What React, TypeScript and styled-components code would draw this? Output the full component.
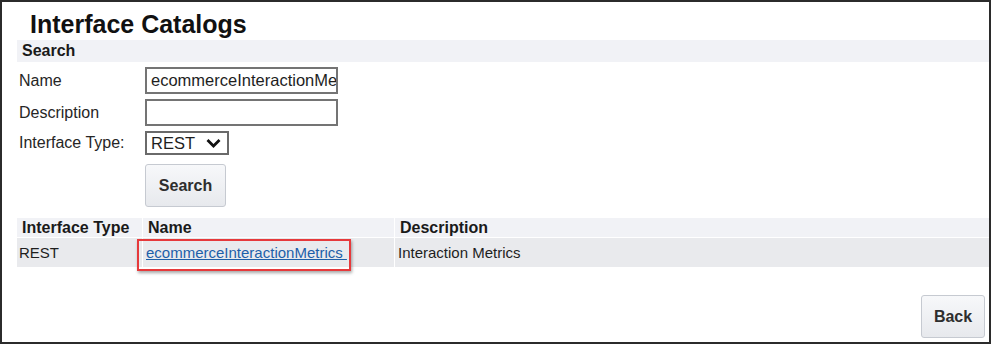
import styled, { createGlobalStyle } from "styled-components";

const GlobalStyle = createGlobalStyle`
  html, body {
    margin: 0;
    padding: 0;
    background: #ffffff;
  }
  body {
    font-family: "Liberation Sans", Arial, sans-serif;
    color: #1e1e1e;
  }
`;

const Frame = styled.div`
  box-sizing: border-box;
  width: 991px;
  height: 344px;
  border: 2px solid #2b2b2b;
  background: #ffffff;
  padding-left: 15px;
  display: flex;
  flex-direction: column;
`;

const Title = styled.h1`
  margin: 0 0 2px 13px;
  padding-top: 8px;
  font-size: 25px;
  line-height: 28px;
  font-weight: bold;
  color: #111111;
`;

const SectionBar = styled.div`
  height: 22px;
  line-height: 22px;
  background: #f1f2f6;
  padding-left: 5px;
  font-size: 16px;
  font-weight: bold;
  color: #1a1a1a;
`;

const Form = styled.div`
  display: grid;
  grid-template-columns: 128px auto;
  justify-content: start;
  align-items: center;
  row-gap: 5px;
  padding-top: 5px;
`;

const Label = styled.label`
  padding-left: 2px;
  font-size: 16px;
  color: #262626;
`;

const TextInput = styled.input`
  box-sizing: border-box;
  width: 193px;
  height: 27px;
  border: 2px solid #747474;
  padding: 0 0 0 4px;
  font-family: "Liberation Sans", Arial, sans-serif;
  font-size: 16.5px;
  color: #1e1e1e;
  outline: none;
`;

const SelectBox = styled.div`
  box-sizing: border-box;
  width: 84px;
  height: 24px;
  border: 2px solid #6a6a6a;
  display: flex;
  align-items: center;
  justify-content: space-between;
  padding: 0 6px 0 4px;
  font-size: 16.5px;
  color: #1e1e1e;
`;

const Button = styled.button<{ $width: number }>`
  box-sizing: border-box;
  width: ${(p) => p.$width}px;
  height: 43px;
  border: 1px solid #c6cad1;
  border-radius: 3px;
  background: linear-gradient(#f7f8fa, #e7e9ed);
  font-family: "Liberation Sans", Arial, sans-serif;
  font-size: 16px;
  font-weight: bold;
  color: #2e2e2e;
  padding: 0;
`;

const ButtonCell = styled.div`
  grid-column: 2;
  margin-top: 4px;
`;

const Table = styled.div`
  margin-top: 11px;
  display: grid;
  grid-template-columns: 125px 251px 1fr;
  gap: 1px;
  background: #ffffff;
`;

const HeadCell = styled.div`
  height: 19px;
  line-height: 19px;
  background: #f1f2f6;
  padding-left: 5px;
  font-size: 16px;
  font-weight: bold;
  color: #1a1a1a;
`;

const Cell = styled.div<{ $pad: number }>`
  height: 29px;
  line-height: 29px;
  background: #e9eaed;
  padding-left: ${(p) => p.$pad}px;
  font-size: 15px;
  color: #1e1e1e;
`;

const Highlight = styled.span`
  position: relative;
  &::after {
    content: "";
    position: absolute;
    left: -9px;
    right: -4px;
    top: -5px;
    bottom: -10px;
    border: 2.5px solid #e6393b;
    box-shadow: 1px 2px 3px rgba(0, 0, 0, 0.35);
    pointer-events: none;
  }
`;

const ItemLink = styled.a`
  color: #1d5fa9;
  text-decoration: underline;
`;

const Footer = styled.div`
  margin-top: auto;
  display: flex;
  justify-content: flex-end;
  padding: 0 4px 4px 0;
`;

const Chevron = () => (
  <svg width="15" height="10" viewBox="0 0 15 10">
    <path d="M1.5 2 L7.5 8 L13.5 2" fill="none" stroke="#111" strokeWidth="2.8" />
  </svg>
);

export default function App() {
  return (
    <>
      <GlobalStyle />
      <Frame>
        <Title>Interface Catalogs</Title>
        <SectionBar>Search</SectionBar>
        <Form>
          <Label>Name</Label>
          <TextInput defaultValue="ecommerceInteractionMetrics" />
          <Label>Description</Label>
          <TextInput defaultValue="" />
          <Label>Interface Type:</Label>
          <SelectBox>
            <span>REST</span>
            <Chevron />
          </SelectBox>
          <ButtonCell>
            <Button $width={81}>Search</Button>
          </ButtonCell>
        </Form>
        <Table>
          <HeadCell>Interface Type</HeadCell>
          <HeadCell>Name</HeadCell>
          <HeadCell>Description</HeadCell>
          <Cell $pad={2}>REST</Cell>
          <Cell $pad={3}>
            <Highlight>
              <ItemLink href="#">ecommerceInteractionMetrics&nbsp;</ItemLink>
            </Highlight>
          </Cell>
          <Cell $pad={3}>Interaction Metrics</Cell>
        </Table>
        <Footer>
          <Button $width={64}>Back</Button>
        </Footer>
      </Frame>
    </>
  );
}
